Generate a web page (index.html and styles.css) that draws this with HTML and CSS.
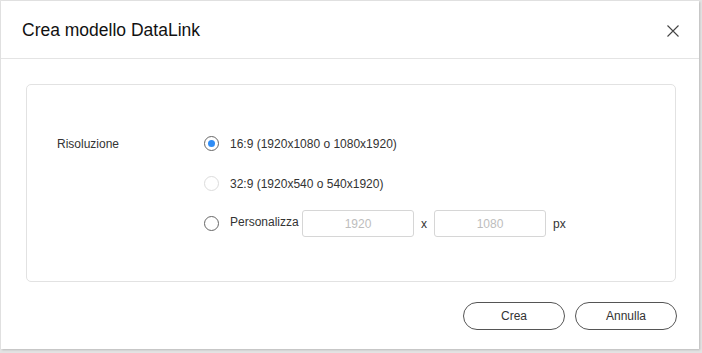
FILE: index.html
```html
<!DOCTYPE html>
<html lang="it">
<head>
<meta charset="utf-8">
<title>Crea modello DataLink</title>
<link rel="stylesheet" href="styles.css">
</head>
<body>
<div class="dialog">
  <div class="header">
    <span class="title">Crea modello DataLink</span>
    <button class="close" aria-label="Chiudi">
      <svg width="12" height="12" viewBox="0 0 12 12"><path d="M0.5 0.5L11.5 11.5M11.5 0.5L0.5 11.5" stroke="#444" stroke-width="1.1" fill="none"/></svg>
    </button>
  </div>
  <div class="content">
    <div class="panel">
      <div class="label">Risoluzione</div>
      <div class="options">
        <label class="option">
          <span class="radio checked"></span>
          <span class="text">16:9 (1920x1080 o 1080x1920)</span>
        </label>
        <label class="option">
          <span class="radio disabled"></span>
          <span class="text">32:9 (1920x540 o 540x1920)</span>
        </label>
        <label class="option custom">
          <span class="radio"></span>
          <span class="text">Personalizza</span>
          <input class="field" placeholder="1920">
          <span class="sep">x</span>
          <input class="field" placeholder="1080">
          <span class="unit">px</span>
        </label>
      </div>
    </div>
  </div>
  <div class="footer">
    <button class="btn">Crea</button>
    <button class="btn">Annulla</button>
  </div>
</div>
</body>
</html>
```
FILE: styles.css
```css
html, body {
  margin: 0;
  padding: 0;
}
body {
  background: #e3e3e3;
  width: 702px;
  height: 353px;
  overflow: hidden;
  font-family: "Liberation Sans", "DejaVu Sans", sans-serif;
  color: #333;
}
.dialog {
  margin: 1px 0 0 1px;
  width: 698px;
  height: 348px;
  background: #fff;
  box-shadow: 1px 1px 2px rgba(0,0,0,0.18);
  display: flex;
  flex-direction: column;
}
.header {
  height: 57px;
  border-bottom: 1px solid #e4e4e4;
  display: flex;
  align-items: center;
  justify-content: space-between;
  padding: 0 20px 0 21px;
}
.title {
  font-size: 17.5px;
  color: #111;
  padding-top: 2px;
}
.close {
  border: none;
  background: none;
  padding: 0;
  width: 12px;
  height: 12px;
  display: flex;
  margin-top: 2px;
}
.content {
  padding: 25px 23px 0 25px;
}
.panel {
  height: 196px;
  border: 1px solid #e2e2e2;
  border-radius: 5px;
  display: flex;
  padding: 0 0 0 30px;
}
.label {
  font-size: 12px;
  width: 147px;
  margin-top: 52px;
}
.options {
  display: flex;
  flex-direction: column;
  padding-top: 51px;
  gap: 25px;
}
.option {
  display: flex;
  align-items: center;
  height: 15px;
  font-size: 12px;
}
.radio {
  width: 13px;
  height: 13px;
  border: 1px solid #666;
  border-radius: 50%;
  box-sizing: content-box;
  margin-right: 11px;
  position: relative;
}
.radio.checked::after {
  content: "";
  position: absolute;
  left: 3px;
  top: 3px;
  width: 7px;
  height: 7px;
  border-radius: 50%;
  background: #2f8cf5;
}
.radio.disabled {
  border-color: #dcdcdc;
}
.custom .text {
  width: 72px;
  margin-top: -4px;
}
.field {
  width: 112px;
  height: 27px;
  box-sizing: border-box;
  border: 1px solid #d6d6d6;
  border-radius: 3px;
  padding: 0;
  text-align: center;
  font-family: inherit;
  font-size: 12px;
  color: #333;
  outline: none;
}
.field::placeholder {
  color: #bdbdbd;
}
.sep {
  width: 20px;
  text-align: center;
}
.unit {
  margin-left: 7px;
}
.footer {
  display: flex;
  justify-content: flex-end;
  gap: 10px;
  padding: 20px 22px 0 0;
}
.btn {
  width: 102px;
  height: 28px;
  border: 1px solid #555;
  border-radius: 14px;
  background: #fff;
  font-family: inherit;
  font-size: 12px;
  color: #333;
  padding: 0;
}
```
